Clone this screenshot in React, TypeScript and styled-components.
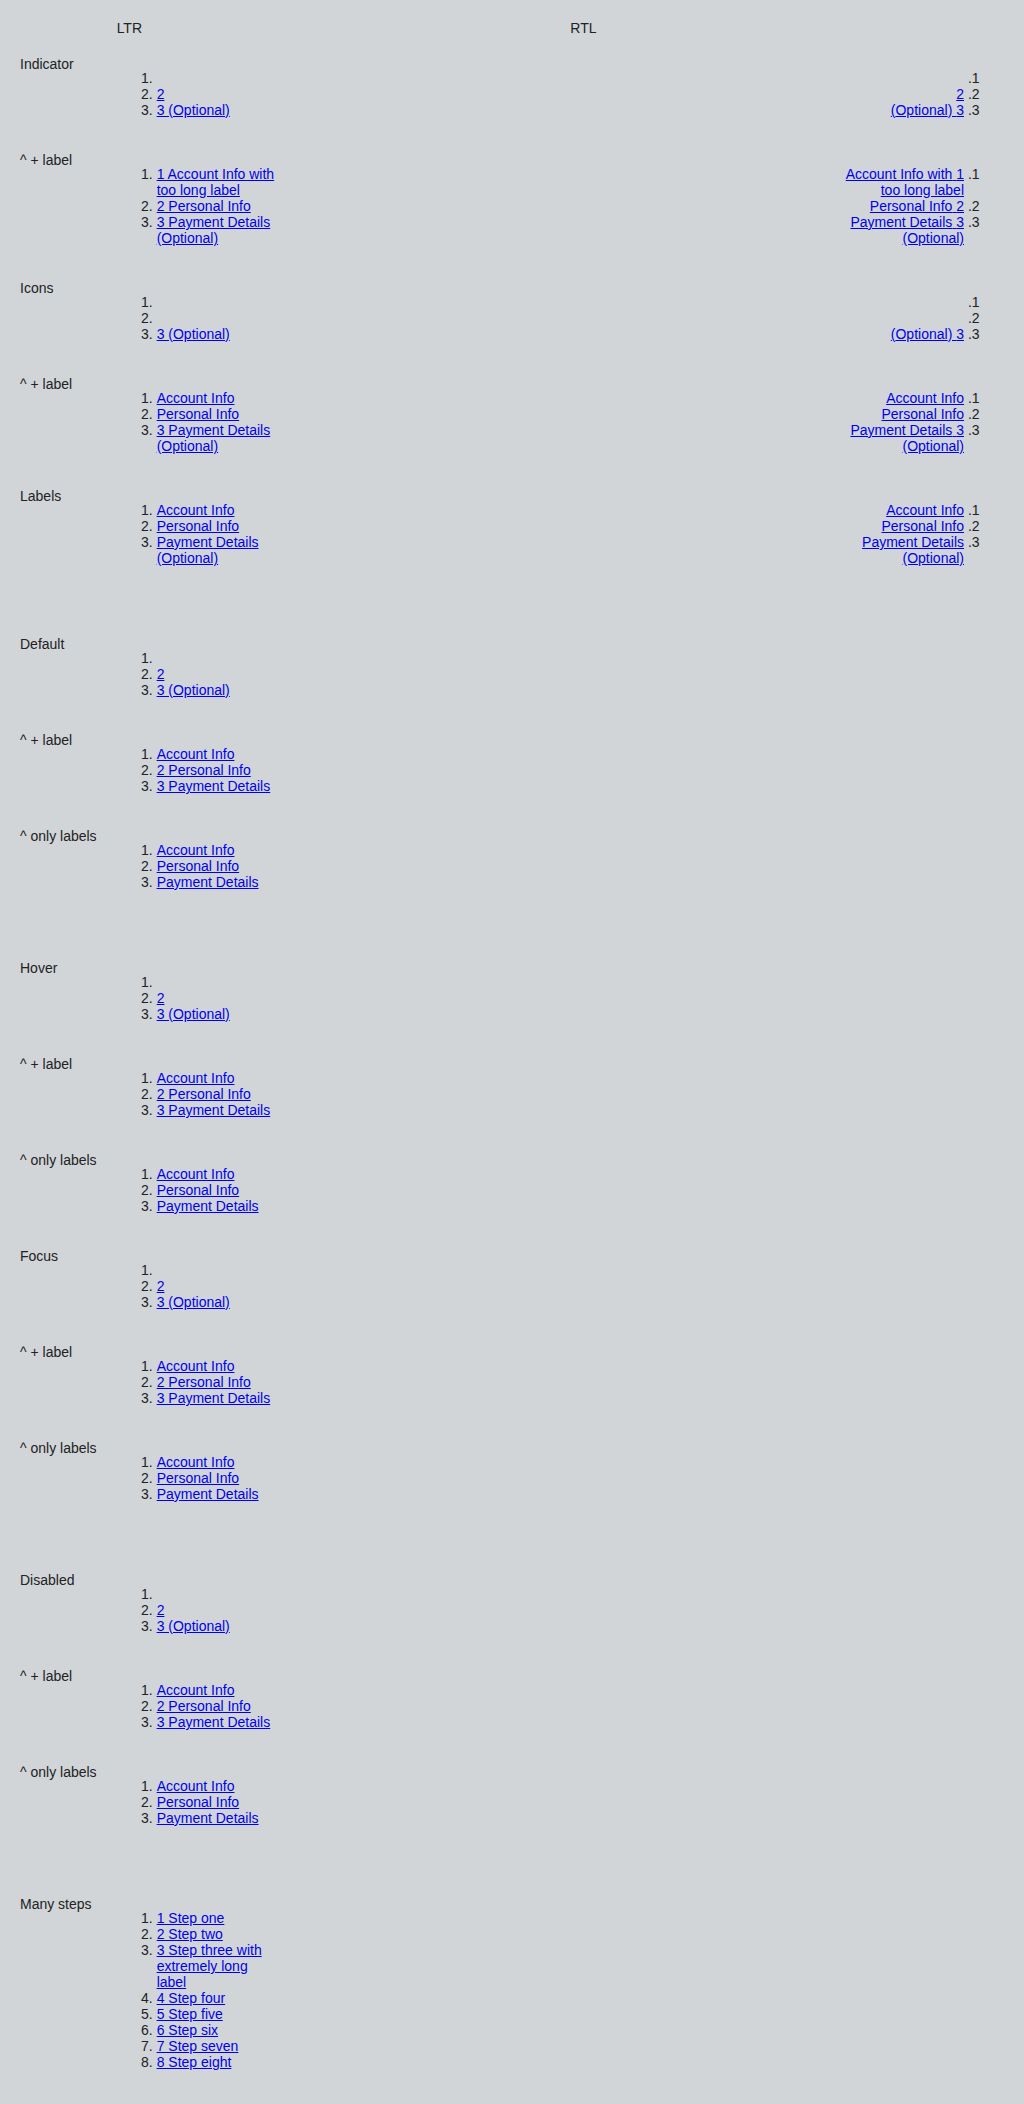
import React from "react";
import styled, { createGlobalStyle } from "styled-components";

const GlobalStyle = createGlobalStyle`
  html, body {
    margin: 0;
    padding: 0;
    background: #d1d5d8;
  }
  body {
    font-family: "Liberation Sans", Arial, sans-serif;
    font-size: 14px;
    color: #222222;
  }
`;

const Board = styled.div`
  display: grid;
  grid-template-columns: max-content 1fr 1fr;
  column-gap: 20px;
  row-gap: 20px;
  padding: 20px;
  align-items: start;
`;

const Heading = styled.div`
  text-align: left;
  font-weight: normal;
  line-height: normal;
`;

const RowLabel = styled.div`
  white-space: nowrap;
`;

const Cell = styled.div`
  min-width: 0;
`;

const GroupBreak = styled.div`
  grid-column: 1 / -1;
  height: 16px;
`;

const StepList = styled.ol<{ $narrow?: boolean }>`
  margin: 14px 0;
  padding-inline-start: 40px;
  width: ${(p) => (p.$narrow ? "110px" : "130px")};
`;

const StepItem = styled.li``;

const StepLink = styled.a`
  color: #0000ee;
  text-decoration: underline;
`;

type Steps = (string | null)[];

type Row = { label: string; steps: Steps; rtl?: boolean; narrow?: boolean };

const indicator: Steps = [null, "2", "3 (Optional)"];
const plusLabel: Steps = ["Account Info", "2 Personal Info", "3 Payment Details"];
const onlyLabels: Steps = ["Account Info", "Personal Info", "Payment Details"];

const groups: Row[][] = [
  [
    { label: "Indicator", steps: indicator, rtl: true },
    {
      label: "^ + label",
      steps: ["1 Account Info with too long label", "2 Personal Info", "3 Payment Details (Optional)"],
      rtl: true,
    },
    { label: "Icons", steps: [null, null, "3 (Optional)"], rtl: true },
    {
      label: "^ + label",
      steps: ["Account Info", "Personal Info", "3 Payment Details (Optional)"],
      rtl: true,
    },
    {
      label: "Labels",
      steps: ["Account Info", "Personal Info", "Payment Details (Optional)"],
      rtl: true,
    },
  ],
  [
    { label: "Default", steps: indicator },
    { label: "^ + label", steps: plusLabel },
    { label: "^ only labels", steps: onlyLabels },
  ],
  [
    { label: "Hover", steps: indicator },
    { label: "^ + label", steps: plusLabel },
    { label: "^ only labels", steps: onlyLabels },
    { label: "Focus", steps: indicator },
    { label: "^ + label", steps: plusLabel },
    { label: "^ only labels", steps: onlyLabels },
  ],
  [
    { label: "Disabled", steps: indicator },
    { label: "^ + label", steps: plusLabel },
    { label: "^ only labels", steps: onlyLabels },
  ],
  [
    {
      label: "Many steps",
      narrow: true,
      steps: [
        "1 Step one",
        "2 Step two",
        "3 Step three with extremely long label",
        "4 Step four",
        "5 Step five",
        "6 Step six",
        "7 Step seven",
        "8 Step eight",
      ],
    },
  ],
];

function Stepper({ steps, narrow }: { steps: Steps; narrow?: boolean }) {
  return (
    <StepList $narrow={narrow}>
      {steps.map((s, i) => (
        <StepItem key={i}>{s ? <StepLink href="#">{s}</StepLink> : null}</StepItem>
      ))}
    </StepList>
  );
}

export default function App() {
  return (
    <>
      <GlobalStyle />
      <Board>
        <Heading />
        <Heading>LTR</Heading>
        <Heading>RTL</Heading>
        {groups.map((group, gi) => (
          <React.Fragment key={gi}>
            {gi > 0 && <GroupBreak />}
            {group.map((row, ri) => (
              <React.Fragment key={ri}>
                <RowLabel>{row.label}</RowLabel>
                <Cell>
                  <Stepper steps={row.steps} narrow={row.narrow} />
                </Cell>
                <Cell dir="rtl">
                  {row.rtl ? <Stepper steps={row.steps} narrow={row.narrow} /> : null}
                </Cell>
              </React.Fragment>
            ))}
          </React.Fragment>
        ))}
      </Board>
    </>
  );
}
